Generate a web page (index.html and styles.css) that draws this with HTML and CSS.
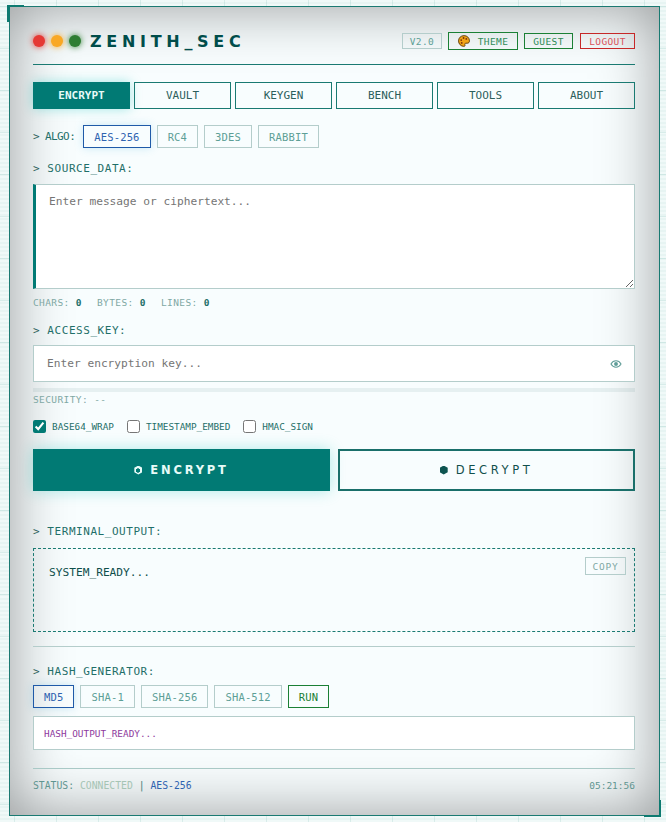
FILE: index.html
```html
<!DOCTYPE html>
<html lang="en">
<head>
  <meta charset="UTF-8">
  <title>ZENITH_SEC</title>
  <link rel="stylesheet" href="styles.css">
</head>
<body>
  <div class="panel">
    <span class="corner corner-tl"></span>
    <span class="corner corner-br"></span>

    <header class="header">
      <div class="brand">
        <span class="dot dot-red"></span>
        <span class="dot dot-amber"></span>
        <span class="dot dot-green"></span>
        <h1 class="logo">ZENITH_SEC</h1>
      </div>
      <div class="header-tools">
        <span class="tag tag-version">V2.0</span>
        <button class="tag tag-theme">
          <svg class="palette" width="12" height="12" viewBox="0 0 13 13">
            <path d="M6.500 .7C3 .7 .6 3.200 .6 6.400c0 3.300 2.600 5.900 5.700 5.900 1.200 0 1.600-.8 1.200-1.600-.4-.9 0-1.800 1.100-1.800h1.400c1.500 0 2.400-1 2.400-2.500C12.400 2.900 9.800 .7 6.500 .7z" fill="#f2a516" stroke="#5b3a06" stroke-width="1"/>
            <circle cx="3.500" cy="5.500" r="1" fill="#7a3208"/>
            <circle cx="6" cy="3.300" r="1" fill="#7a3208"/>
            <circle cx="9" cy="4.200" r="1" fill="#7a3208"/>
            <circle cx="4" cy="8.600" r="1" fill="#7a3208"/>
          </svg>
          THEME
        </button>
        <button class="tag tag-guest">GUEST</button>
        <button class="tag tag-logout">LOGOUT</button>
      </div>
    </header>

    <nav class="tabs">
      <button class="tab tab-active">ENCRYPT</button>
      <button class="tab">VAULT</button>
      <button class="tab">KEYGEN</button>
      <button class="tab">BENCH</button>
      <button class="tab">TOOLS</button>
      <button class="tab">ABOUT</button>
    </nav>

    <div class="algo-row">
      <span class="label label-inline"><b>&gt;</b> ALGO:</span>
      <button class="chip chip-active">AES-256</button>
      <button class="chip">RC4</button>
      <button class="chip">3DES</button>
      <button class="chip">RABBIT</button>
    </div>

    <div class="label label-source"><b>&gt;</b> SOURCE_DATA:</div>
    <textarea class="source" placeholder="Enter message or ciphertext..."></textarea>
    <div class="counts">
      <span>CHARS: <b>0</b></span>
      <span>BYTES: <b>0</b></span>
      <span>LINES: <b>0</b></span>
    </div>

    <div class="label label-key"><b>&gt;</b> ACCESS_KEY:</div>
    <div class="key-field">
      <input class="key-input" type="password" placeholder="Enter encryption key...">
      <svg class="eye" width="12" height="8" viewBox="0 0 14 10">
        <path d="M.7 5C2.300 2.200 4.500 1 7 1s4.700 1.200 6.300 4C11.700 7.800 9.500 9 7 9S2.300 7.800 .7 5z" fill="none" stroke="#5f9d98" stroke-width="1.300"/>
        <circle cx="7" cy="5" r="2.400" fill="#5f9d98"/>
      </svg>
    </div>
    <div class="strength"></div>
    <div class="security">SECURITY: --</div>

    <div class="options">
      <label class="option"><input type="checkbox" checked>BASE64_WRAP</label>
      <label class="option"><input type="checkbox">TIMESTAMP_EMBED</label>
      <label class="option"><input type="checkbox">HMAC_SIGN</label>
    </div>

    <div class="actions">
      <button class="action action-primary"><span class="hex hex-open"></span>ENCRYPT</button>
      <button class="action"><span class="hex"></span>DECRYPT</button>
    </div>

    <div class="label label-output"><b>&gt;</b> TERMINAL_OUTPUT:</div>
    <div class="terminal">
      <span>SYSTEM_READY...</span>
      <button class="copy">COPY</button>
    </div>

    <div class="rule"></div>

    <div class="label label-hash"><b>&gt;</b> HASH_GENERATOR:</div>
    <div class="hash-row">
      <button class="chip chip-active">MD5</button>
      <button class="chip">SHA-1</button>
      <button class="chip">SHA-256</button>
      <button class="chip">SHA-512</button>
      <button class="chip chip-run">RUN</button>
    </div>
    <div class="hash-output">HASH_OUTPUT_READY...</div>

    <footer class="status">
      <div>STATUS: <span class="connected">CONNECTED</span> <span class="sep">|</span> <span class="algo">AES-256</span></div>
      <div class="clock">05:21:56</div>
    </footer>
  </div>
</body>
</html>
```

FILE: styles.css
```css
*{
  padding: 0;
  margin: 0;
  box-sizing: border-box;
}

html, body{
  height: 100%;
}

body{
  background-color: #f0f9f8;
  background-image:
    linear-gradient(rgba(0,121,107,0.10) 1px, transparent 1px),
    linear-gradient(90deg, rgba(0,121,107,0.10) 1px, transparent 1px),
    repeating-linear-gradient(0deg, transparent 0 2px, rgba(0,121,107,0.04) 2px 4px);
  background-size: 42px 42px, 42px 42px, auto;
  background-position: 14px 6px, 14px 6px, 0 0;
  font-family: "DejaVu Sans Mono", "Liberation Mono", monospace;
  padding: 6px 6px 6px 9px;
  overflow: hidden;
}

button{
  font-family: inherit;
  background: transparent;
  cursor: pointer;
}

.panel{
  position: relative;
  width: 651px;
  height: 810px;
  padding: 16px 24px 0 23px;
  background-color: #f8fdfe;
  border: 1px solid #1a7a72;
  box-shadow: inset 0 0 60px rgba(0,0,0,0.4);
}

.corner{
  position: absolute;
  width: 17px;
  height: 17px;
}
.corner-tl{
  top: -2px;
  left: -3px;
  border-top: 2px solid #0d7a70;
  border-left: 3px solid #0d7a70;
}
.corner-br{
  bottom: -2px;
  right: -2px;
  border-bottom: 2px solid #0d7a70;
  border-right: 2px solid #0d7a70;
}

/* header */
.header{
  display: flex;
  justify-content: space-between;
  align-items: center;
  height: 42px;
  padding-bottom: 5px;
  border-bottom: 1px solid #1a7a72;
}
.brand{
  display: flex;
  align-items: center;
  gap: 6px;
}
.dot{
  width: 12px;
  height: 12px;
  border-radius: 50%;
}
.dot-red{
  background: #e53935;
  box-shadow: 0 0 6px #e53935;
}
.dot-amber{
  background: #f9a825;
  box-shadow: 0 0 6px #f9a825;
}
.dot-green{
  background: #2e7d32;
  box-shadow: 0 0 6px #2e7d32;
}
.logo{
  font-family: "DejaVu Sans", sans-serif;
  font-size: 16px;
  font-weight: 700;
  letter-spacing: 4.7px;
  color: #004d4a;
  margin-left: 3px;
}
.header-tools{
  display: flex;
  align-items: center;
  gap: 6px;
}
.tag{
  display: flex;
  align-items: center;
  justify-content: center;
  height: 16px;
  font-size: 9.500px;
  letter-spacing: 0.4px;
  border: 1px solid;
}
.tag-version{
  width: 40px;
  color: #5d9f96;
  border-color: #b4cdcb;
}
.tag-theme{
  width: 70px;
  height: 18px;
  gap: 8px;
  color: #2e8b57;
  border-color: #1b8035;
}
.tag-guest{
  width: 49px;
  color: #2e8b57;
  border-color: #1b8035;
}
.tag-logout{
  width: 55px;
  margin-left: 1px;
  color: #d9525a;
  border-color: #c62828;
}

/* tabs */
.tabs{
  display: grid;
  grid-template-columns: repeat(6, 1fr);
  gap: 4px;
  margin-top: 17px;
}
.tab{
  height: 27px;
  font-size: 11px;
  color: #2c5f5c;
  border: 1px solid #1a7a72;
}
.tab-active{
  background: #017a74;
  border-color: #017a74;
  color: #e8fbf8;
  font-weight: 700;
  box-shadow: 0 0 12px rgba(0,188,180,0.35);
}

/* labels */
.label{
  font-size: 11px;
  letter-spacing: 0.55px;
  line-height: 13px;
  color: #1f6f69;
}
.label b{
  font-weight: 400;
  color: #2c5f5c;
}
.label-source{
  margin-top: 14px;
  height: 13px;
}
.label-key{
  margin-top: 15px;
  height: 13px;
}
.label-output{
  margin-top: 34px;
  height: 13px;
}
.label-hash{
  margin-top: 18px;
  height: 13px;
}

/* chips */
.algo-row, .hash-row{
  display: flex;
  align-items: center;
  gap: 6px;
}
.algo-row{
  margin-top: 16px;
}
.hash-row{
  margin-top: 7px;
}
.label-inline{
  margin-right: 2px;
  letter-spacing: -0.6px;
}
.chip{
  height: 23px;
  padding: 0 10px;
  font-size: 10.500px;
  letter-spacing: 0.17px;
  color: #5d9f96;
  border: 1px solid #b4cdcb;
}
.chip-active{
  color: #2f63b0;
  border-color: #1f5aa8;
  box-shadow: 0 0 8px rgba(60,170,220,0.25);
}
.chip-run{
  color: #1b8035;
  border-color: #1b8035;
}

/* inputs */
.source{
  display: block;
  width: 100%;
  height: 105px;
  margin-top: 9px;
  padding: 10px 13px;
  font-family: inherit;
  font-size: 11.200px;
  background: #fff;
  border: 1px solid #b4cdcb;
  border-left: 3px solid #017a74;
  border-radius: 0;
  outline: none;
}
.counts{
  display: flex;
  gap: 15px;
  margin-top: 8px;
  height: 12px;
  font-size: 9.500px;
  letter-spacing: 0.4px;
  line-height: 12px;
  color: #7fa8a4;
}
.counts b{
  color: #1f6f69;
}
.key-field{
  display: flex;
  align-items: center;
  height: 37px;
  margin-top: 8px;
  padding: 0 12px 0 13px;
  background: #fff;
  border: 1px solid #b4cdcb;
}
.key-input{
  flex: 1;
  min-width: 0;
  font-family: inherit;
  font-size: 11.200px;
  background: transparent;
  border: 0;
  outline: none;
}
.strength{
  height: 4px;
  margin-top: 6px;
  background: rgba(0,77,74,0.07);
}
.security{
  margin-top: 2px;
  height: 12px;
  font-size: 9.500px;
  letter-spacing: 0.4px;
  line-height: 12px;
  color: #7fa8a4;
}

/* options */
.options{
  display: flex;
  gap: 13px;
  margin-top: 14px;
}
.option{
  display: flex;
  align-items: center;
  gap: 6px;
  font-size: 9.350px;
  color: #1f6f69;
}
.option input{
  width: 13px;
  height: 13px;
  margin: 0;
  accent-color: #017a74;
}

/* buttons */
.actions{
  display: grid;
  grid-template-columns: 1fr 1fr;
  gap: 8px;
  margin-top: 16px;
}
.action{
  display: flex;
  align-items: center;
  justify-content: center;
  gap: 8px;
  height: 42px;
  font-family: "DejaVu Sans", sans-serif;
  font-size: 11.500px;
  letter-spacing: 3.600px;
  color: #11504c;
  border: 2px solid #1a6f6a;
}
.action-primary{
  background: #017a74;
  border-color: #017a74;
  color: #e8fbf8;
  font-weight: 700;
  letter-spacing: 2.800px;
  box-shadow: 0 0 15px rgba(0,188,180,0.3);
}
.hex{
  width: 8px;
  height: 9px;
  background: #0d5450;
  clip-path: polygon(50% 0, 100% 25%, 100% 75%, 50% 100%, 0 75%, 0 25%);
}
.hex-open{
  background: radial-gradient(circle, #017a74 0 2px, #e8fbf8 2.200px);
}

/* terminal */
.terminal{
  position: relative;
  height: 84px;
  margin-top: 10px;
  padding: 17px 15px;
  font-size: 11.200px;
  color: #0f4f4b;
  border: 1px dashed #1a7a72;
}
.copy{
  position: absolute;
  top: 8px;
  right: 8px;
  width: 41px;
  height: 18px;
  font-size: 9.500px;
  letter-spacing: 0.8px;
  color: #7fa8a4;
  border: 1px solid #b4cdcb;
}
.rule{
  height: 1px;
  margin-top: 14px;
  background: #b4cdcb;
}

/* hash */
.hash-output{
  display: flex;
  align-items: center;
  height: 34px;
  margin-top: 8px;
  padding: 0 10px;
  font-size: 9.400px;
  color: #8e3a9d;
  background: #fff;
  border: 1px solid #b4cdcb;
}

/* footer */
.status{
  display: flex;
  justify-content: space-between;
  align-items: center;
  height: 34px;
  margin-top: 18px;
  font-size: 9.750px;
  color: #5f9590;
  border-top: 1px solid #a9c9c6;
}
.connected{
  color: #a5c4b4;
}
.sep{
  color: #3f7f7a;
}
.algo{
  color: #2f63b0;
}
.clock{
  font-size: 9.500px;
}
```
